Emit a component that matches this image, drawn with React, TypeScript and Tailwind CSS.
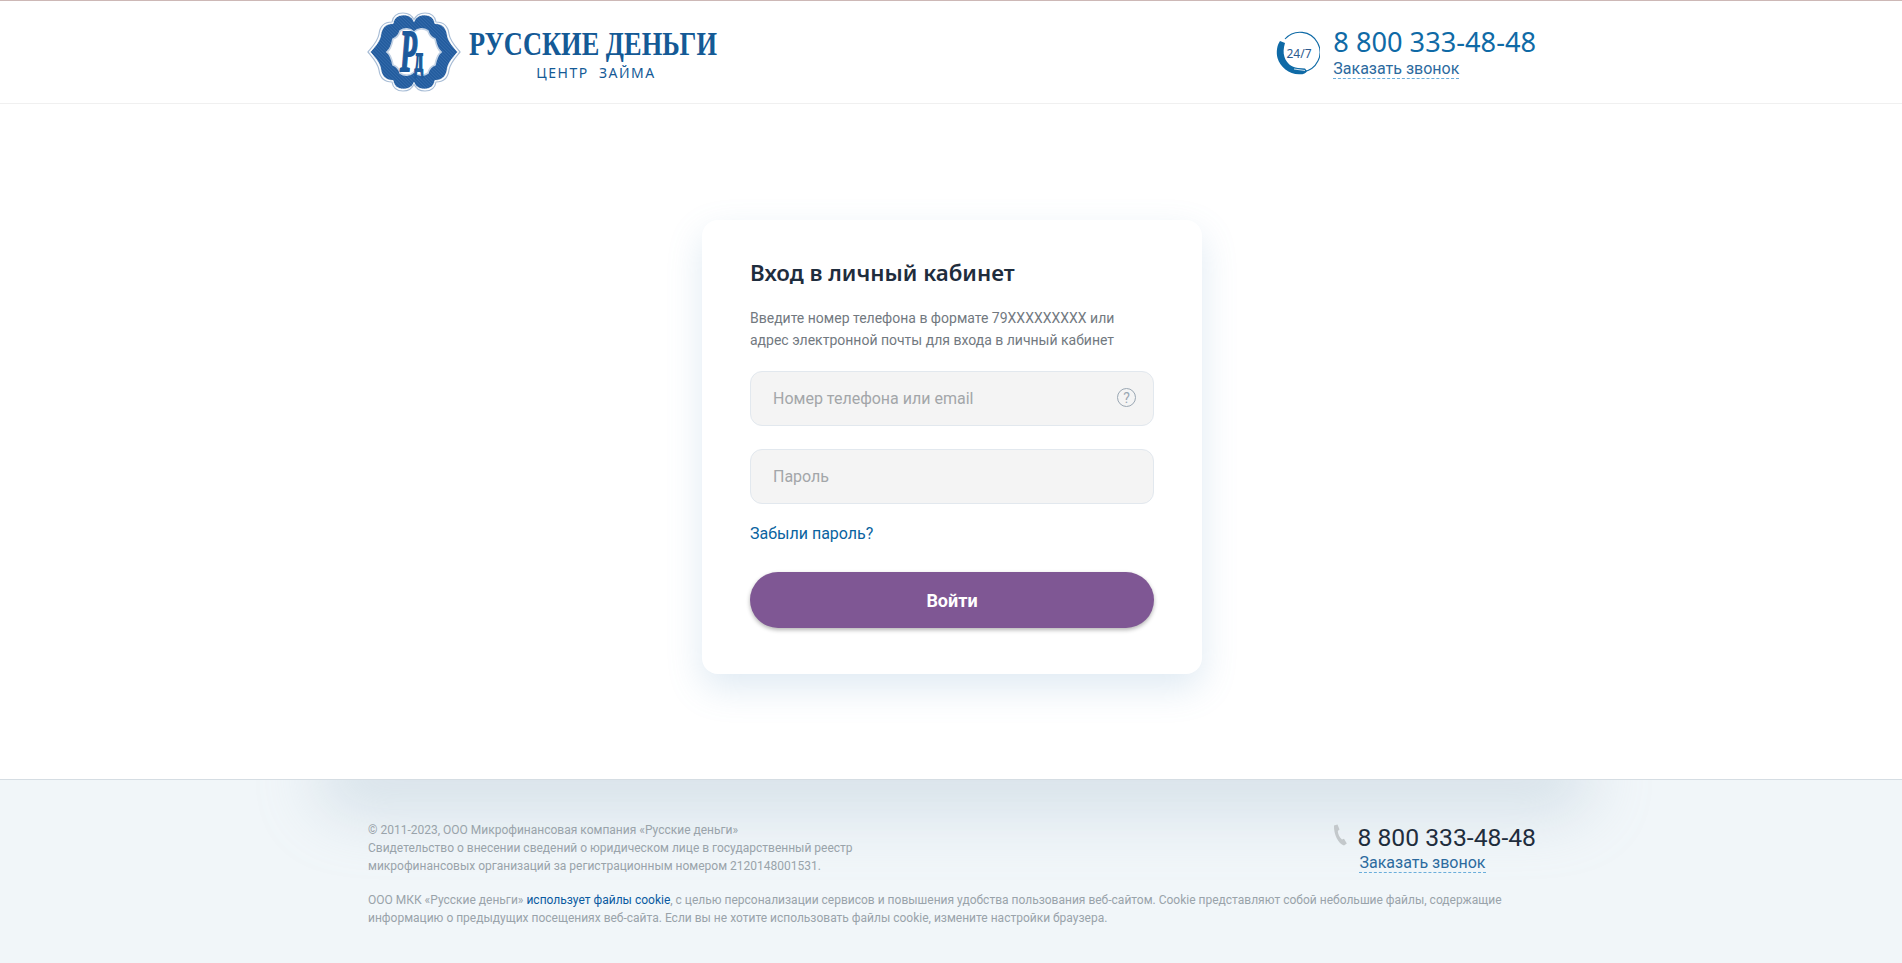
const outerLobes =
  'M46 7C48 2 52 0 57 0C63 0 67 3 68 9C75 9 80 13 81 21C82 28 87 33 92 39C87 45 82 50 81 57C80 65 75 69 68 69C67 75 63 78 57 78C52 78 48 76 46 71C44 76 40 78 35 78C29 78 25 75 24 69C17 69 12 65 11 57C10 50 5 45 0 39C5 33 10 28 11 21C12 13 17 9 24 9C25 3 29 0 35 0C40 0 44 2 46 7Z';
const innerLobes =
  'M46 19C50 15 56 15 60 18C61 22 64 25 67 26C68 31 69 36 73 39C69 42 68 47 67 52C64 53 61 56 60 60C56 63 50 63 46 59C42 63 36 63 32 60C31 56 28 53 25 52C24 47 23 42 19 39C23 36 24 31 25 26C28 25 31 22 32 18C36 15 42 15 46 19Z';

function LogoMark() {
  return (
    <svg width="92" height="78" viewBox="0 0 92 78" className="shrink-0 overflow-visible">
      <defs>
        <pattern id="guilloche" width="2.500" height="2.500" patternUnits="userSpaceOnUse" patternTransform="rotate(45)">
          <rect width="2.500" height="2.500" fill="#235c9e" />
          <path d="M0 0H2.500" stroke="#4f83bd" strokeWidth="0.7" />
        </pattern>
      </defs>
      <path d={outerLobes} fill="#fff" stroke="#a8bdd6" strokeWidth="1.200" />
      <path d={outerLobes} fill="url(#guilloche)" stroke="#fff" strokeWidth="0.8" transform="translate(46 39) scale(0.95) translate(-46 -39)" />
      <path d={innerLobes} fill="#fff" stroke="#c4d3e5" strokeWidth="1.600" />
      <text
        transform="translate(32 58) scale(0.6 1.3)"
        fontFamily="'Liberation Serif', serif"
        fontWeight="700"
        fill="#1d5a9c"
        stroke="#1d5a9c"
        strokeWidth="1.600"
      >
        <tspan fontSize="46" fontStyle="italic">Р</tspan>
        <tspan fontSize="28" dx="-4">д</tspan>
      </text>
    </svg>
  );
}

function Phone247() {
  return (
    <svg width="44" height="44" viewBox="0 0 44 44" className="shrink-0">
      <path d="M9 8A20 20 0 1 1 27 41" fill="none" stroke="#0f6aa6" strokeWidth="1.100" />
      <path
        d="M4 10L9 12C7.500 17 7 22 8.500 26C10.500 32 15 36 22 37L29 37.500L31 40C30 42.500 27 43.500 23 43.300C13 43 4 36 1.500 27C0 21 1 14 4 10Z"
        fill="#0f6aa6"
      />
      <path d="M18 38L29 39.500" stroke="#fff" strokeWidth="0.8" />
      <text x="23" y="26.500" textAnchor="middle" fontFamily="'Noto Sans', sans-serif" fontSize="12" fill="#2c5a8e">
        24/7
      </text>
    </svg>
  );
}

function PhoneSmall() {
  return (
    <svg width="14" height="22" viewBox="0 0 14 22" className="shrink-0">
      <path
        d="M1 1.500L4.500 0.500L6.500 5.500L4.800 7C5 10.500 6.500 13.500 9 15.500L11 14.800L13.800 19.500L11 21.500C5.500 20 0.500 10 1 1.500Z"
        fill="#c3c8cb"
      />
    </svg>
  );
}

export default function App() {
  return (
    <div className="flex min-h-[963px] flex-col bg-white font-['Roboto',sans-serif]">
      <header className="h-[104px] border-t border-b border-t-[#cdb8b6] border-b-[#f0f0f0]">
        <div className="mx-auto flex h-full w-[1170px] items-center justify-between pl-[2px]">
          <a href="#" className="flex items-center gap-[9px] pb-[1px]">
            <LogoMark />
            <div className="flex w-[248px] flex-col items-center pt-[4px] text-[#145a96]">
              <span className="w-[310px] origin-left scale-x-[0.8] self-start font-['Liberation_Serif',serif] text-[33px] leading-[34px] font-bold whitespace-nowrap">
                РУССКИЕ ДЕНЬГИ
              </span>
              <span className="mt-[4px] pl-[6px] font-['Noto_Sans',sans-serif] text-[14px] leading-[16px] tracking-[1.500px] whitespace-pre">
                ЦЕНТР  ЗАЙМА
              </span>
            </div>
          </a>
          <div className="flex items-center gap-[13px] pt-[2px]">
            <Phone247 />
            <div className="flex flex-col items-start">
              <a href="#" className="-mt-[2px] font-['Noto_Sans',sans-serif] text-[27.200px] leading-[32px] whitespace-nowrap text-[#0f6aa6]">
                8 800 333-48-48
              </a>
              <a href="#" className="mt-[2px] border-b border-dashed border-[#6aaedb] text-[16px] leading-[18px] text-[#2c6a9e]">
                Заказать звонок
              </a>
            </div>
          </div>
        </div>
      </header>

      <main className="flex flex-1 justify-center pt-[116px] pl-[2px]">
        <form className="h-[454px] w-[500px] rounded-2xl bg-white px-12 pt-[38px] shadow-[0_14px_36px_rgba(96,150,195,0.2)]">
          <h1 className="font-['Noto_Sans',sans-serif] text-[22.300px] leading-[30px] font-semibold text-[#1f2d3d]">Вход в личный кабинет</h1>
          <p className="mt-[19px] text-[14px] leading-[22px] text-[#72797f]">
            Введите номер телефона в формате 79XXXXXXXXX или
            <br />
            адрес электронной почты для входа в личный кабинет
          </p>
          <div className="relative mt-[20px]">
            <input
              type="text"
              placeholder="Номер телефона или email"
              className="h-[55px] w-full rounded-xl border border-[#e2e8ee] bg-[#f4f4f4] px-[22px] text-[16px] outline-none placeholder:text-[#a3a6a9]"
            />
            <span className="absolute top-[17px] right-[18px] flex h-[19px] w-[19px] items-center justify-center rounded-full border border-[#9aa7b3] text-[14px] leading-none text-[#9aa7b3]">
              ?
            </span>
          </div>
          <input
            type="password"
            placeholder="Пароль"
            className="mt-[23px] h-[55px] w-full rounded-xl border border-[#e2e8ee] bg-[#f4f4f4] px-[22px] text-[16px] outline-none placeholder:text-[#a3a6a9]"
          />
          <a href="#" className="mt-[20px] block text-[16px] leading-[20px] text-[#0a63a0]">
            Забыли пароль?
          </a>
          <button
            type="button"
            className="mt-[28px] h-[56px] w-full rounded-full bg-[#7f5794] text-[18px] font-bold text-white shadow-[0_2px_4px_rgba(0,0,0,0.3)]"
          >
            Войти
          </button>
        </form>
      </main>

      <footer className="relative h-[184px] overflow-hidden border-t border-[#d5dde3] bg-[#f1f6f9]">
        <div className="absolute -top-[30px] left-[338px] h-[30px] w-[1232px] rounded-full shadow-[0_12px_60px_22px_rgba(170,190,208,0.36)]" />
        <div className="relative mx-auto w-[1170px] pt-[41px] pl-[2px] text-[12px] leading-[18px] text-[#99a3aa]">
          <div className="flex items-start justify-between">
            <p>
              © 2011-2023, ООО Микрофинансовая компания «Русские деньги»
              <br />
              Свидетельство о внесении сведений о юридическом лице в государственный реестр
              <br />
              микрофинансовых организаций за регистрационным номером 2120148001531.
            </p>
            <div className="mt-[3px] flex items-start gap-[10px]">
              <PhoneSmall />
              <div className="flex flex-col items-start">
                <a href="#" className="-mt-[1px] text-[24.700px] leading-[30px] whitespace-nowrap text-[#1f2d3d]">
                  8 800 333-48-48
                </a>
                <a href="#" className="mt-[1px] ml-[2px] border-b border-dashed border-[#6aaedb] text-[16px] leading-[18px] text-[#2c6a9e]">
                  Заказать звонок
                </a>
              </div>
            </div>
          </div>
          <p className="mt-[16px]">
            ООО МКК «Русские деньги» <a href="#" className="text-[#0a5aa0]">использует файлы cookie</a>, с целью персонализации сервисов и повышения удобства пользования веб-сайтом. Cookie представляют собой небольшие файлы, содержащие
            <br />
            информацию о предыдущих посещениях веб-сайта. Если вы не хотите использовать файлы cookie, измените настройки браузера.
          </p>
        </div>
      </footer>
    </div>
  );
}
